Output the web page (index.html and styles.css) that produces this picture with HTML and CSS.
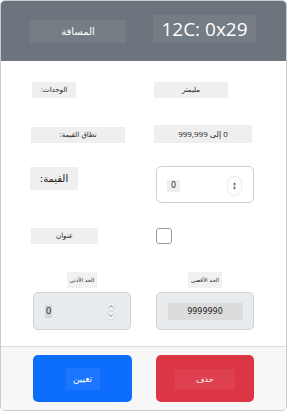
FILE: index.html
```html
<!DOCTYPE html>
<html lang="ar">
<head>
<meta charset="utf-8">
<link rel="stylesheet" href="styles.css">
</head>
<body>
<div class="card">
  <div class="header">
    <div class="name" dir="rtl">المسافة</div>
    <div class="title">12C: 0x29</div>
  </div>
  <div class="content">
    <div class="row r1">
      <span class="lbl l1" dir="rtl">الوحدات:</span>
      <span class="val v1" dir="rtl">مليمتر</span>
    </div>
    <div class="row r2">
      <span class="lbl l2" dir="rtl">نطاق القيمة:</span>
      <span class="val v2" dir="rtl">0 إلى 999,999</span>
    </div>
    <div class="row r3">
      <span class="lbl l3" dir="rtl">القيمة:</span>
      <div class="num">
        <span class="numval">0</span>
        <span class="spin">
          <svg width="13" height="18" viewBox="0 0 13 18"><path d="M6.5 5.5 L5 7.5 H8 Z M6.5 12.5 L5 10.5 H8 Z" fill="#444"/><circle cx="6.5" cy="9" r="0.8" fill="#888"/></svg>
        </span>
      </div>
    </div>
    <div class="row r4">
      <span class="lbl l4" dir="rtl">عنوان</span>
      <span class="check"></span>
    </div>
    <div class="limits">
      <div class="lim">
        <span class="limlbl" dir="rtl">الحد الأدنى</span>
        <div class="limbox">
          <span class="minval">0</span>
          <span class="spin2">
            <svg width="12" height="18" viewBox="0 0 12 18"><circle cx="6" cy="4.5" r="4.2" fill="#f2f3f5" stroke="#cdd0d4" stroke-width="0.6"/><circle cx="6" cy="13.5" r="4.2" fill="#f2f3f5" stroke="#cdd0d4" stroke-width="0.6"/><path d="M3.8 5.6 L6 3.6 L8.2 5.6 M3.8 12.4 L6 14.4 L8.2 12.4" fill="none" stroke="#7b8088" stroke-width="0.9"/></svg>
          </span>
        </div>
      </div>
      <div class="lim">
        <span class="limlbl" dir="rtl">الحد الأقصى</span>
        <div class="limbox">
          <span class="maxval">9999990</span>
        </div>
      </div>
    </div>
  </div>
  <div class="footer">
    <div class="btn blue"><span class="btxt" dir="rtl">تعيين</span></div>
    <div class="btn red"><span class="btxt rtxt" dir="rtl">حذف</span></div>
  </div>
</div>
</body>
</html>
```
FILE: styles.css
```css
html, body {
  margin: 0;
  padding: 0;
  background: #ffffff;
}
body {
  font-family: "DejaVu Sans", "Open Sans", sans-serif;
  color: #333;
}
.card {
  width: 287px;
  height: 411px;
  box-sizing: border-box;
  border: 1px solid #cbcbcb;
  border-radius: 5px;
  overflow: hidden;
  display: flex;
  flex-direction: column;
  background: #fff;
}
.header {
  height: 60px;
  flex: none;
  background: #6c757d;
  box-sizing: border-box;
  display: flex;
  align-items: flex-end;
  padding: 0 0 18px 29px;
  gap: 27px;
}
.name {
  width: 96px;
  height: 23px;
  line-height: 23px;
  text-align: center;
  background: rgba(255, 255, 255, 0.06);
  color: #fff;
  font-size: 10px;
}
.title {
  width: 103px;
  height: 28px;
  line-height: 28px;
  text-align: center;
  background: rgba(255, 255, 255, 0.06);
  color: #fff;
  font-family: "Open Sans", sans-serif;
  font-size: 19px;
}
.content {
  flex: 1;
  display: flex;
  flex-direction: column;
  padding: 21px 0 0 29px;
}
.row {
  display: grid;
  grid-template-columns: 124px 110px;
}
.lbl, .val {
  display: block;
  background: #efefef;
  text-align: center;
  font-size: 7px;
  color: #222;
  white-space: nowrap;
}
.r1 { height: 16px; align-items: start; }
.l1 { width: 44px; height: 16px; line-height: 16px; margin-left: 2px; }
.v1 { width: 74px; height: 16px; line-height: 16px; }
.r2 { margin-top: 27px; height: 18px; align-items: end; }
.l2 { width: 94px; height: 16px; line-height: 16px; margin-left: 1px; }
.v2 { width: 98px; height: 18px; line-height: 18px; font-size: 8px; font-family: "Open Sans", "DejaVu Sans", sans-serif; }
.r3 { margin-top: 23px; height: 37px; align-items: start; }
.l3 { width: 48px; height: 23px; line-height: 23px; margin-top: 1px; font-size: 10px; }
.num {
  width: 98px;
  height: 37px;
  margin-left: 2px;
  box-sizing: border-box;
  border: 1px solid #cfcfcf;
  border-radius: 5px;
  display: flex;
  align-items: center;
  justify-content: space-between;
  padding: 0 12px 0 10px;
}
.numval {
  width: 13px;
  height: 12px;
  line-height: 12px;
  text-align: center;
  background: #eeeeee;
  font-size: 8px;
  margin-top: 2px;
}
.spin {
  width: 13px;
  height: 18px;
  background: #fff;
  border-radius: 6px;
  box-shadow: 0 0 2px rgba(0, 0, 0, 0.25);
  display: flex;
  margin-top: 2px;
}
.r4 { margin-top: 25px; height: 16px; align-items: start; }
.l4 { width: 67px; height: 16px; line-height: 16px; margin-left: 1px; }
.check {
  width: 16px;
  height: 16px;
  margin-left: 2px;
  box-sizing: border-box;
  border: 1px solid #999;
  border-radius: 3px;
  background: #fff;
}
.limits {
  margin-top: 28px;
  margin-left: 3px;
  display: grid;
  grid-template-columns: 98px 98px;
  column-gap: 25px;
}
.lim {
  display: flex;
  flex-direction: column;
  align-items: center;
}
.limlbl {
  height: 16px;
  line-height: 16px;
  padding: 0 3px;
  background: #f1f1f1;
  font-size: 5.5px;
  color: #222;
  white-space: nowrap;
}
.limbox {
  margin-top: 4px;
  width: 98px;
  height: 38px;
  box-sizing: border-box;
  background: #e9ecef;
  border: 1px solid #cfd2d5;
  border-radius: 5px;
  display: flex;
  align-items: center;
}
.minval {
  margin-left: 11px;
  width: 7px;
  height: 13px;
  line-height: 13px;
  text-align: center;
  background: #d6d6d6;
  font-size: 9px;
  color: #333;
}
.spin2 {
  margin-left: auto;
  margin-right: 13px;
  display: flex;
}
.maxval {
  margin: 0 auto;
  width: 75px;
  height: 17px;
  line-height: 17px;
  text-align: center;
  background: #dcdcdc;
  font-size: 8px;
  color: #222;
}
.footer {
  flex: none;
  height: 64px;
  box-sizing: border-box;
  border-top: 1px solid #dcdcdc;
  background: #f7f7f7;
  padding: 8px 0 0 32px;
  display: grid;
  grid-template-columns: 99px 98px;
  grid-template-rows: 47px;
  column-gap: 24px;
}
.btn {
  border-radius: 5px;
  display: flex;
  align-items: center;
  justify-content: center;
}
.blue { background: #0d6efd; }
.red { background: #dc3545; }
.btxt {
  width: 34px;
  height: 22px;
  line-height: 22px;
  text-align: center;
  background: rgba(255, 255, 255, 0.06);
  color: #fff;
  font-size: 9px;
}
.rtxt {
  width: 60px;
  height: 21px;
  line-height: 21px;
  margin-top: 2px;
  font-size: 8px;
}
```
